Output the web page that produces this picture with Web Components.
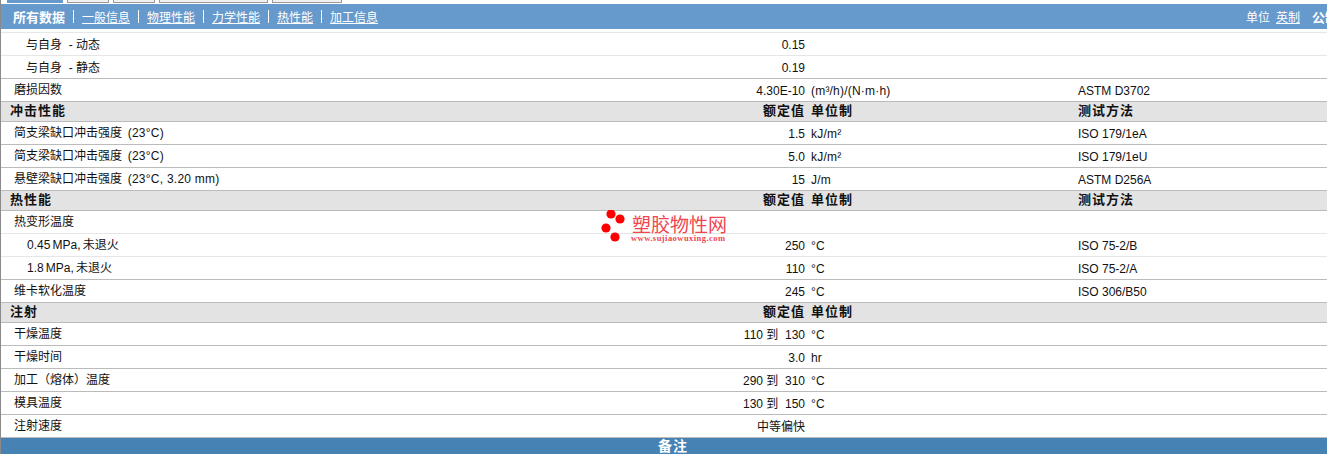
<!DOCTYPE html>
<html lang="zh"><head><meta charset="utf-8"><title>塑胶物性</title>
<style>
html,body{margin:0;padding:0;background:#fff;overflow:hidden}
body{font:12px/1 "Liberation Sans","Noto Sans CJK SC",sans-serif;color:#111;width:1327px;height:454px;position:relative}
</style></head><body>
<data-sheet>
  <tab-strip></tab-strip>
  <sub-nav></sub-nav>
  <prop-row kind="first" indent="26" label="与自身 &nbsp;- 动态" value="0.15"></prop-row>
  <prop-row kind="softup" indent="26" label="与自身 &nbsp;- 静态" value="0.19"></prop-row>
  <prop-row label="磨损因数" value="4.30E-10" unit="(m³/h)/(N·m·h)" test="ASTM D3702"></prop-row>
  <sec-head title="冲击性能" test="测试方法"></sec-head>
  <prop-row label="简支梁缺口冲击强度 &nbsp;(23°C)" value="1.5" unit="kJ/m²" test="ISO 179/1eA"></prop-row>
  <prop-row label="简支梁缺口冲击强度 &nbsp;(23°C)" value="5.0" unit="kJ/m²" test="ISO 179/1eU"></prop-row>
  <prop-row label="悬壁梁缺口冲击强度 &nbsp;(23°C, 3.20 mm)" value="15" unit="J/m" test="ASTM D256A"></prop-row>
  <sec-head title="热性能" test="测试方法"></sec-head>
  <prop-row kind="soft" label="热变形温度"></prop-row>
  <prop-row kind="soft" indent="27" tight label="0.45 MPa, 未退火" value="250" unit="°C" test="ISO 75-2/B"></prop-row>
  <prop-row indent="27" tight label="1.8 MPa, 未退火" value="110" unit="°C" test="ISO 75-2/A"></prop-row>
  <prop-row label="维卡软化温度" value="245" unit="°C" test="ISO 306/B50"></prop-row>
  <sec-head title="注射"></sec-head>
  <prop-row label="干燥温度" value="110 到 &nbsp;130" unit="°C"></prop-row>
  <prop-row label="干燥时间" value="3.0" unit="hr"></prop-row>
  <prop-row label="加工（熔体）温度" value="290 到 &nbsp;310" unit="°C"></prop-row>
  <prop-row label="模具温度" value="130 到 &nbsp;150" unit="°C"></prop-row>
  <prop-row label="注射速度" value="中等偏快"></prop-row>
  <notes-bar>备注</notes-bar>
  <logo-mark></logo-mark>
</data-sheet>
<script>
const el=(name,css,html)=>customElements.define(name,class extends HTMLElement{
  connectedCallback(){ if(this.shadowRoot)return;
    const a=n=>this.getAttribute(n)||'';
    this.attachShadow({mode:'open'}).innerHTML='<style>'+css+'</style>'+html(a);
  }});
const latin=s=>s.replace(/\(.*\)/,m=>'<span style="letter-spacing:.25px;margin-left:-1px">'+m+'</span>');
el('data-sheet',':host{display:block;width:1327px;height:454px;position:relative;overflow:hidden;box-sizing:border-box;border-left:1px solid #8a8a8a}',()=>'<slot></slot>');
el('tab-strip',`:host{display:flex;height:4px;gap:4px;padding-left:6px;overflow:hidden}
 i{display:block;height:3px;box-sizing:border-box;border:1px solid #999;border-top:0;background:#f1f1f1}
 i.on{background:#6699cc;border-color:#6699cc}`,()=>'<i class="on" style="width:56px"></i><i style="width:42px"></i><i style="width:42px"></i><i style="width:109px"></i><i style="width:70px"></i>');
el('sub-nav',`:host{display:flex;align-items:center;justify-content:space-between;height:24px;padding-bottom:1px;background:#6699cc;color:#fff;font:12px "Liberation Sans","Noto Sans CJK SC",sans-serif;padding-left:12px;white-space:nowrap;overflow:hidden}
 nav,div{display:flex;align-items:center}
 b{font-size:13px}
 u{cursor:pointer}
 s{text-decoration:none;width:1px;height:13px;background:#fff;margin:0 8px}
 s.t{height:11px;margin:0 5px 0 7px}
 .r{width:81px;flex:none}
 .r u{margin-left:6px}`,()=>'<nav><b>所有数据</b><s></s><u>一般信息</u><s></s><u>物理性能</u><s></s><u>力学性能</u><s></s><u>热性能</u><s></s><u>加工信息</u></nav><div class="r"><span>单位</span><u>英制</u><s class="t"></s><b style="flex:none">公制</b></div>');
el('sec-head',`:host{display:grid;grid-template-columns:804px 6px 267px 1fr;height:19px;background:#e3e3e3;border-bottom:1px solid #bbb;font:bold 13px/15px "Noto Sans CJK SC",sans-serif;color:#111;letter-spacing:1px;white-space:nowrap}
 .a{display:flex;justify-content:space-between;padding-left:9px}`,a=>`<div class="a"><span>${a('title')}</span><span>额定值</span></div><i></i><span>单位制</span><span>${a('test')}</span>`);
el('prop-row',`:host{display:grid;grid-template-columns:804px 6px 267px 1fr;height:22px;border-bottom:1px solid #bbb;font:12px/22px "Liberation Sans","Noto Sans CJK SC",sans-serif;color:#111;white-space:nowrap}
 :host([kind=soft]){border-bottom-color:#e6e6e6}
 :host([kind=first]){border-bottom-color:#e6e6e6;margin-top:3px;border-top:1px solid #e6e6e6;line-height:24px}
 :host([kind=softup]){line-height:24px}
 :host([tight]) .l{word-spacing:-1.2px}
 .a{display:flex;justify-content:space-between}
 .v,.u,.t{padding-top:1px;box-sizing:border-box;height:22px}
 :host([kind=first]) .v,:host([kind=softup]) .v{padding-top:0}
 .u{letter-spacing:.2px}`,a=>`<div class="a" style="padding-left:${(a('indent')||14)-1}px"><span class="l">${latin(a('label'))}</span><span class="v">${a('value')}</span></div><i></i><span class="u">${a('unit')}</span><span class="t">${a('test')}</span>`);
el('notes-bar',`:host{display:block;height:17px;background:#4682b4;color:#fff;font:bold 14px/15px "Noto Sans CJK SC",sans-serif;text-align:center;letter-spacing:1px;padding-left:18px;overflow:hidden}`,()=>'<slot></slot>');
el('logo-mark',`:host{position:absolute;left:600px;top:210px;width:130px;height:34px;display:block;color:#f04650;white-space:nowrap}
 svg{position:absolute;left:0;top:0}
 .c{position:absolute;left:31px;top:5px;font:19px/18px "Noto Sans CJK SC",sans-serif}
 .w{position:absolute;left:30px;top:24px;font:bold 8.5px/9px "Liberation Serif",serif;letter-spacing:.45px}`,()=>`<svg width="30" height="34" viewBox="0 0 30 34"><g fill="#f00"><circle cx="10" cy="4" r="4.6"/><circle cx="19" cy="9" r="4.6"/><circle cx="5" cy="18" r="4.6"/><circle cx="14" cy="27" r="4.6"/></g></svg><span class="c">塑胶物性网</span><span class="w">www.sujiaowuxing.com</span>`);
</script>
</body></html>
